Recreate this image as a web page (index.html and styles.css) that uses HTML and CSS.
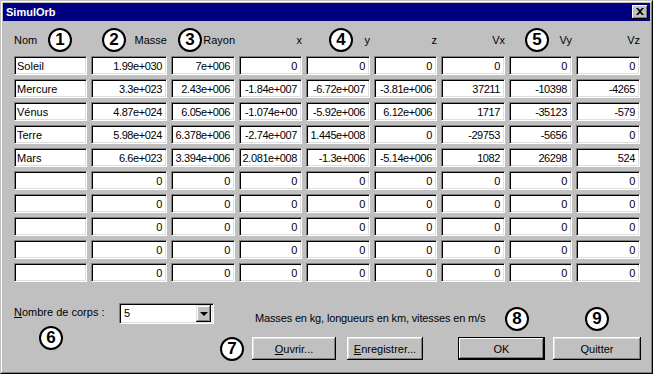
FILE: index.html
```html
<!DOCTYPE html>
<html lang="fr">
<head>
    <meta charset="UTF-8">
    <title>SimulOrb</title>
    <link rel="stylesheet" href="styles.css">
</head>
<body>
    <div class="window">
        <div class="frame">
            <div class="titlebar">
                <span>SimulOrb</span>
                <span class="close">
                    <svg width="8" height="7" viewBox="0 0 8 7"><path d="M0 0h2l2 2 2-2h2L5 3.5 8 7H6L4 5 2 7H0l3-3.5z" fill="#000"/></svg>
                </span>
            </div>

            <div class="content">
                <div class="grid head">
                    <span class="left">Nom</span>
                    <span>Masse</span>
                    <span>Rayon</span>
                    <span>x</span>
                    <span>y</span>
                    <span>z</span>
                    <span>Vx</span>
                    <span>Vy</span>
                    <span>Vz</span>
                </div>

                <div class="grid table">
                    <div class="cell name">Soleil</div><div class="cell">1.99e+030</div><div class="cell">7e+006</div><div class="cell">0</div><div class="cell">0</div><div class="cell">0</div><div class="cell">0</div><div class="cell">0</div><div class="cell">0</div>
                    <div class="cell name">Mercure</div><div class="cell">3.3e+023</div><div class="cell">2.43e+006</div><div class="cell">-1.84e+007</div><div class="cell">-6.72e+007</div><div class="cell">-3.81e+006</div><div class="cell">37211</div><div class="cell">-10398</div><div class="cell">-4265</div>
                    <div class="cell name">Vénus</div><div class="cell">4.87e+024</div><div class="cell">6.05e+006</div><div class="cell">-1.074e+00</div><div class="cell">-5.92e+006</div><div class="cell">6.12e+006</div><div class="cell">1717</div><div class="cell">-35123</div><div class="cell">-579</div>
                    <div class="cell name">Terre</div><div class="cell">5.98e+024</div><div class="cell">6.378e+006</div><div class="cell">-2.74e+007</div><div class="cell">1.445e+008</div><div class="cell">0</div><div class="cell">-29753</div><div class="cell">-5656</div><div class="cell">0</div>
                    <div class="cell name">Mars</div><div class="cell">6.6e+023</div><div class="cell">3.394e+006</div><div class="cell">2.081e+008</div><div class="cell">-1.3e+006</div><div class="cell">-5.14e+006</div><div class="cell">1082</div><div class="cell">26298</div><div class="cell">524</div>
                    <div class="cell name"></div><div class="cell">0</div><div class="cell">0</div><div class="cell">0</div><div class="cell">0</div><div class="cell">0</div><div class="cell">0</div><div class="cell">0</div><div class="cell">0</div>
                    <div class="cell name"></div><div class="cell">0</div><div class="cell">0</div><div class="cell">0</div><div class="cell">0</div><div class="cell">0</div><div class="cell">0</div><div class="cell">0</div><div class="cell">0</div>
                    <div class="cell name"></div><div class="cell">0</div><div class="cell">0</div><div class="cell">0</div><div class="cell">0</div><div class="cell">0</div><div class="cell">0</div><div class="cell">0</div><div class="cell">0</div>
                    <div class="cell name"></div><div class="cell">0</div><div class="cell">0</div><div class="cell">0</div><div class="cell">0</div><div class="cell">0</div><div class="cell">0</div><div class="cell">0</div><div class="cell">0</div>
                    <div class="cell name"></div><div class="cell">0</div><div class="cell">0</div><div class="cell">0</div><div class="cell">0</div><div class="cell">0</div><div class="cell">0</div><div class="cell">0</div><div class="cell">0</div>
                </div>

                <div class="footer-top">
                    <span class="count-label"><u>N</u>ombre de corps :</span>
                    <div class="combo">
                        <span class="combo-value">5</span>
                        <span class="combo-btn"><span class="arrow"></span></span>
                    </div>
                    <span class="note">Masses en kg, longueurs en km, vitesses en m/s</span>
                </div>

                <div class="buttons">
                    <button class="btn open"><u>O</u>uvrir...</button>
                    <button class="btn save"><u>E</u>nregistrer...</button>
                    <button class="btn ok">OK</button>
                    <button class="btn quit">Quitter</button>
                </div>
            </div>
        </div>

        <!-- numbered callouts -->
        <span class="mark m1">1</span>
        <span class="mark m2">2</span>
        <span class="mark m3">3</span>
        <span class="mark m4">4</span>
        <span class="mark m5">5</span>
        <span class="mark m6">6</span>
        <span class="mark m7">7</span>
        <span class="mark m8">8</span>
        <span class="mark m9">9</span>
    </div>
</body>
</html>
```

FILE: styles.css
```css
body {
    margin: 0;
    background: #c0c0c0;
    font-family: "Liberation Sans", Arial, sans-serif;
    font-size: 11px;
    color: #000;
}

.window {
    position: relative;
    width: 653px;
    height: 374px;
    box-sizing: border-box;
    border: 1px solid;
    border-color: #c0c0c0 #000 #000 #c0c0c0;
    background: #c0c0c0;
}

.frame {
    height: 100%;
    box-sizing: border-box;
    border: 1px solid;
    border-color: #fff #808080 #808080 #fff;
    padding: 1px;
}

.titlebar {
    height: 18px;
    background: #000080;
    color: #fff;
    font-weight: bold;
    display: flex;
    align-items: center;
    justify-content: space-between;
    padding: 0 2px 0 3px;
}

.close {
    width: 16px;
    height: 14px;
    box-sizing: border-box;
    background: #c0c0c0;
    box-shadow: inset -1px -1px #000, inset 1px 1px #fff, inset -2px -2px #808080;
    display: flex;
    align-items: center;
    justify-content: center;
    padding-bottom: 1px;
}

.content {
    padding: 13px 0 0 11px;
}

.grid {
    display: grid;
    grid-template-columns: 73px 76px 64px 63px 64px 63px 64px 63px 64px;
    column-gap: 4px;
}

.head {
    line-height: 13px;
    margin-bottom: 9px;
    text-align: right;
}

.head .left {
    text-align: left;
}

.table {
    grid-auto-rows: 19px;
    row-gap: 4px;
}

.cell {
    box-sizing: border-box;
    background: #fff;
    border: 1px solid;
    border-color: #808080 #fff #fff #808080;
    box-shadow: inset 1px 1px #000, inset -1px -1px #dfdfdf;
    padding: 1px 4px 0 2px;
    line-height: 16px;
    letter-spacing: -0.4px;
    text-align: right;
    white-space: nowrap;
    overflow: hidden;
}

.cell.name {
    text-align: left;
    letter-spacing: 0;
}

.footer-top {
    display: flex;
    align-items: center;
    height: 21px;
    margin-top: 21px;
}

.count-label {
    width: 105px;
    padding-bottom: 3px;
}

.combo {
    width: 95px;
    height: 21px;
    box-sizing: border-box;
    background: #fff;
    border: 1px solid;
    border-color: #808080 #fff #fff #808080;
    box-shadow: inset 1px 1px #000, inset -1px -1px #dfdfdf;
    display: flex;
    justify-content: space-between;
    padding: 1px 2px 1px 1px;
}

.combo-value {
    padding: 2px 0 0 3px;
}

.combo-btn {
    width: 15px;
    height: 17px;
    box-sizing: border-box;
    background: #c0c0c0;
    box-shadow: inset -1px -1px #000, inset 1px 1px #dfdfdf, inset -2px -2px #808080, inset 2px 2px #fff;
    display: flex;
    align-items: center;
    justify-content: center;
}

.arrow {
    border-left: 4px solid transparent;
    border-right: 4px solid transparent;
    border-top: 4px solid #000;
    margin-top: 1px;
}

.note {
    margin-left: 41px;
    padding-top: 8px;
    letter-spacing: -0.15px;
}

.buttons {
    display: flex;
    margin: 13px 0 0 238px;
}

.btn {
    height: 23px;
    box-sizing: border-box;
    background: #c0c0c0;
    border: none;
    padding: 0;
    font: 11px "Liberation Sans", Arial, sans-serif;
    color: #000;
    box-shadow: inset -1px -1px #000, inset 1px 1px #fff, inset -2px -2px #808080, inset 2px 2px #dfdfdf;
}

.open { width: 84px; }
.save { width: 76px; margin-left: 11px; }
.ok {
    width: 87px;
    margin-left: 35px;
    box-shadow: inset 0 0 0 1px #000, inset -2px -2px #000, inset 2px 2px #fff, inset -3px -3px #808080;
}
.quit { width: 88px; margin-left: 8px; }

.mark {
    position: absolute;
    width: 24px;
    height: 24px;
    box-sizing: border-box;
    border: 2px solid #000;
    border-radius: 50%;
    background: #fff;
    font: bold 17px "Liberation Sans", Arial, sans-serif;
    line-height: 20px;
    text-align: center;
}

.m1 { left: 47px; top: 27px; }
.m2 { left: 101px; top: 27px; }
.m3 { left: 177px; top: 27px; }
.m4 { left: 328px; top: 27px; }
.m5 { left: 524px; top: 27px; }
.m6 { left: 38px; top: 325px; }
.m7 { left: 219px; top: 336px; }
.m8 { left: 504px; top: 306px; }
.m9 { left: 584px; top: 306px; }
```
